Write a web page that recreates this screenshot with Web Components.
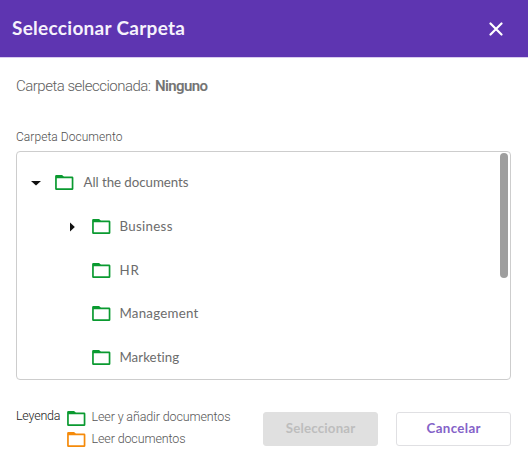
<!DOCTYPE html>
<html lang="es">
<head>
<meta charset="utf-8">
<title>Seleccionar Carpeta</title>
<style>
body { margin: 0; background: #fff; }
</style>
</head>
<body>
<folder-dialog></folder-dialog>
<script>
// Single line of text whose tracking is set so that it spans its "span" width.
class FitText extends HTMLElement {
  connectedCallback() {
    const root = this.attachShadow({ mode: 'open' });
    root.innerHTML = '<style>:host{display:block;white-space:nowrap;flex:none}span{display:inline-block}</style><span><slot></slot></span>';
    const s = root.querySelector('span');
    const n = this.textContent.length;
    const gap = (Number(this.getAttribute('span')) - s.getBoundingClientRect().width) / (n - 1);
    s.style.letterSpacing = gap.toFixed(3) + 'px';
    s.style.marginRight = (-gap).toFixed(3) + 'px';
  }
}

class FolderIcon extends HTMLElement {
  connectedCallback() {
    this.attachShadow({ mode: 'open' }).innerHTML = `
      <style>:host{display:block;flex:none;width:19px;height:16px;color:#0a9a30}
      :host([tone=orange]){color:#f58a0a} svg{display:block}</style>
      <svg width="19" height="16" viewBox="0 0 19 16"><path fill="currentColor" fill-rule="evenodd"
      d="M1.4 0H7l1.9 1.5h8.2q1.3 0 1.3 1.3v11q0 1.3-1.3 1.3H1.4Q.1 15.1.1 13.8V1.3Q.1 0 1.4 0zM1.8 3.2v10.1h14.9V3.2z"/></svg>`;
  }
}

class TreeRow extends HTMLElement {
  connectedCallback() {
    const state = this.getAttribute('state');
    const arrow = state === 'open' ? '<path d="M0 4h10L5 8.6z"/>' : state === 'closed' ? '<path d="M3 1.6v9L7.8 6z"/>' : '';
    this.attachShadow({ mode: 'open' }).innerHTML = `
      <style>:host{display:flex;height:43.8px;align-items:center;padding-left:50px;font:13.3px/18px Lato,sans-serif;color:#6c6c6c}
      :host([root]){padding-left:13.5px}
      svg{display:block;flex:none;width:10px;height:12px;margin:3px 16px 0 0;fill:#111}
      folder-icon{margin:2px 8.4px 0 -1px}
      :host([root]) folder-icon{margin:1.6px 9.2px 0 -1.2px}
      :host([root]) svg{margin-top:2px}</style>
      <svg viewBox="0 0 10 12">${arrow}</svg><folder-icon></folder-icon><slot></slot>`;
  }
}

class DialogButton extends HTMLElement {
  connectedCallback() {
    this.attachShadow({ mode: 'open' }).innerHTML = `
      <style>:host{box-sizing:border-box;display:flex;width:115px;height:34px;align-items:center;justify-content:center;
      border:1px solid #e0e0e3;border-radius:3px;background:#fff;color:#8462c8;font:700 13.3px/32px Lato,sans-serif;padding-bottom:2px}
      :host([disabled]){background:#e0e0e0;border-color:#e0e0e0;color:#bdbdbd}</style><slot></slot>`;
  }
}

class FolderDialog extends HTMLElement {
  connectedCallback() {
    this.attachShadow({ mode: 'open' }).innerHTML = `
      <style>
      :host{display:flex;flex-direction:column;box-sizing:border-box;width:528px;height:468px;background:#fff;color:#757575;font-family:Roboto,sans-serif}
      header{box-sizing:border-box;height:58px;flex:none;display:flex;justify-content:space-between;background:#5e35b1;border-bottom:1px solid #d9cbef;color:#f6f2fc;padding:0 25px 0 12px;font:700 19px/56px Lato,sans-serif}
      header svg{display:block;width:14px;height:14px;margin-top:22px}
      .chosen{display:flex;gap:4px;height:20px;padding:18px 0 0 16px;font-size:15px;font-weight:300;line-height:20px;color:#606060}
      .chosen b{font-weight:600;color:#747474}
      .label{padding:33px 0 0 16px;font-size:12px;line-height:16px;height:22px;font-weight:300;color:#505050}
      .tree{box-sizing:border-box;display:flex;justify-content:space-between;width:495px;height:229px;margin-left:16px;border:1px solid #cdcdcd;border-radius:4px;overflow:hidden;flex:none}
      .rows{padding-top:8.2px}
      .thumb{width:8px;height:125px;margin:1px 2px 0 0;border-radius:4px;background:#9e9e9e;flex:none}
      footer{display:flex;padding:28px 0 0 16px}
      .legend{display:grid;grid-template-columns:51px auto;font-size:12.5px;line-height:16px;font-weight:300;width:247px}
      .legend>fit-text{color:#222}
      .item{display:flex;gap:5.5px;height:21.7px;color:#555}
      .item folder-icon{margin-top:2.5px}.item fit-text{margin-top:1.4px}
      .item.second{grid-column:2}
      .buttons{display:flex;gap:18px;padding-top:4px}
      </style>
      <header><fit-text span="173">Seleccionar Carpeta</fit-text>
        <svg viewBox="0 0 14 14"><path d="M1.5 1.5l11 11m0-11l-11 11" fill="none" stroke="#fff" stroke-width="2.2" stroke-linecap="round"/></svg></header>
      <div class="chosen"><fit-text span="135">Carpeta seleccionada:</fit-text><b><fit-text span="53">Ninguno</fit-text></b></div>
      <div class="label"><fit-text span="106.5">Carpeta Documento</fit-text></div>
      <div class="tree"><div class="rows">
        <tree-row root state="open"><fit-text span="105">All the documents</fit-text></tree-row>
        <tree-row state="closed"><fit-text span="53">Business</fit-text></tree-row>
        <tree-row><fit-text span="19.5">HR</fit-text></tree-row>
        <tree-row><fit-text span="79">Management</fit-text></tree-row>
        <tree-row><fit-text span="60">Marketing</fit-text></tree-row>
      </div><div class="thumb"></div></div>
      <footer><div class="legend"><fit-text span="44.5">Leyenda</fit-text>
        <div class="item"><folder-icon></folder-icon><fit-text span="139">Leer y añadir documentos</fit-text></div>
        <div class="item second"><folder-icon tone="orange"></folder-icon><fit-text span="94">Leer documentos</fit-text></div></div>
        <div class="buttons"><dialog-button disabled><fit-text span="69.5">Seleccionar</fit-text></dialog-button><dialog-button><fit-text span="54">Cancelar</fit-text></dialog-button></div>
      </footer>`;
  }
}
customElements.define('folder-icon', FolderIcon);
customElements.define('tree-row', TreeRow);
customElements.define('dialog-button', DialogButton);
customElements.define('folder-dialog', FolderDialog);
customElements.define('fit-text', FitText);
</script>
</body>
</html>
